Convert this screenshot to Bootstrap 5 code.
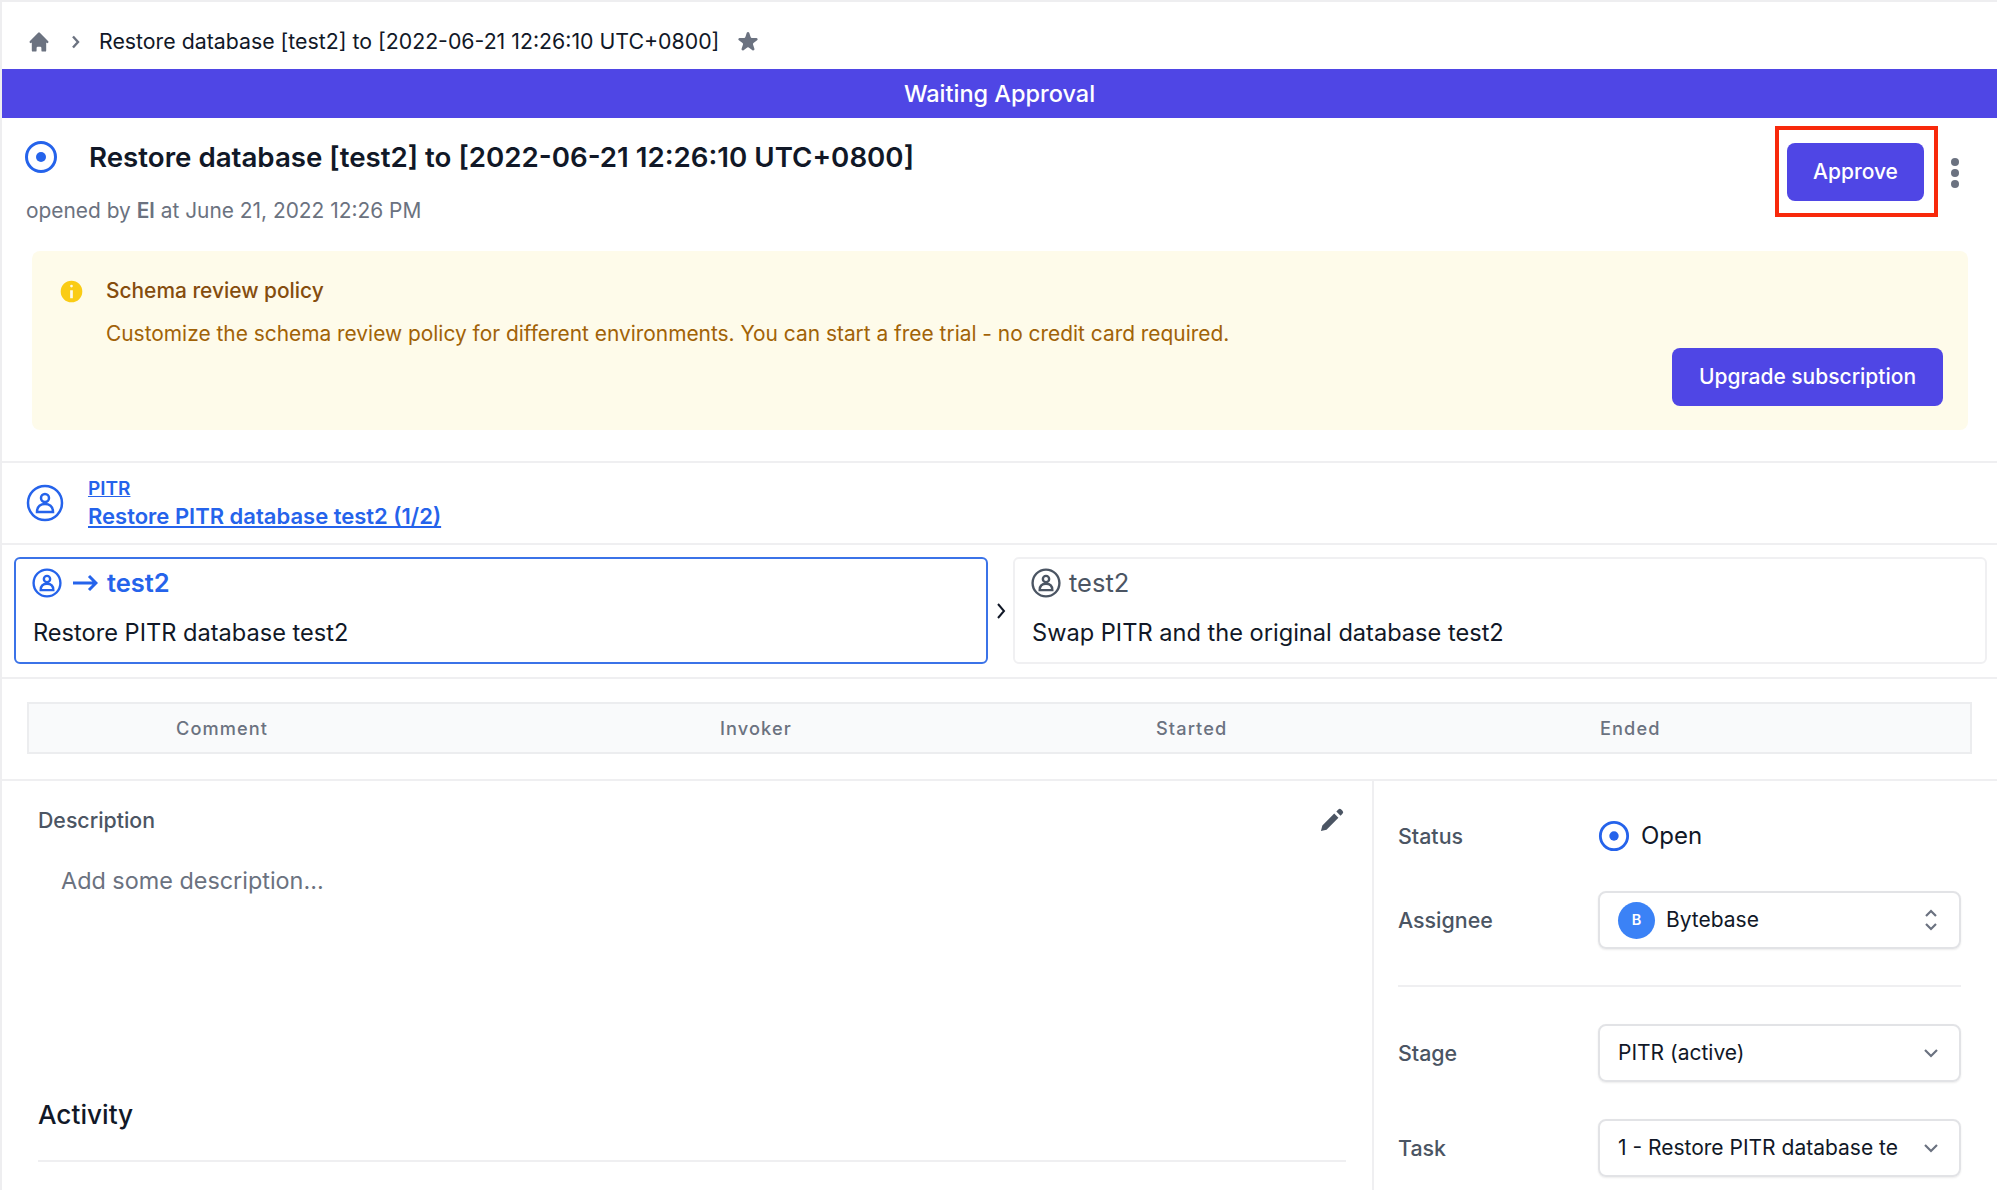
<!DOCTYPE html>
<html lang="en"><head><meta charset="utf-8"><title>Issue</title>
<link href="https://cdn.jsdelivr.net/npm/bootstrap@5.3.0/dist/css/bootstrap.min.css" rel="stylesheet">
<style>
html,body{height:1190px;overflow:hidden}
body{font-family:Inter,"Liberation Sans",sans-serif;color:#111827;background:#fff;font-size:22px;-webkit-font-smoothing:antialiased}
.shell{width:1997px;height:1190px;border-left:2px solid #eeeef0;border-top:2px solid #eeeef0;overflow:hidden}
.crumb{height:67px;padding-left:25px;padding-top:12px;font-size:21.3px;color:#111827}
.crumb .sep{margin:0 17px 0 18px}
.banner{height:49px;background:#4f46e5;color:#fff;font-weight:500;font-size:23.5px}
.headrow{padding:0 36px 0 22px;height:133px}
.titleline{font-size:27.7px;font-weight:600;line-height:38px;margin-top:20px;color:#111827}
.titleline svg{margin-right:31px}
.opened{font-size:20.9px;color:#6b7280;margin:19px 0 0 2px}
.opened b{font-weight:600}
.redbox{border:4px solid #f8290b;width:163px;height:91px;margin-top:8px;margin-right:11px}
.bb-btn{background:#4f46e5;color:#fff;font-weight:500;border:0;border-radius:8px;font-family:inherit}
.bb-btn:hover{background:#4338ca;color:#fff}
.appr{width:137px;height:58px;font-size:21px;margin-left:-2px}
.upg{width:271px;height:58px;font-size:21px}
.dotsv{margin-top:38px}
.warnbox{margin:0 29px 0 30px;height:179px;background:#fefbea;border-radius:8px;padding:26px 25px 24px 26px}
.warnhead{font-weight:500;color:#854d0e;font-size:20.9px;line-height:28px}
.warnbody{color:#a16207;font-size:20.9px;line-height:28px;margin:15px 0 0 48px}
.gap-head{margin-left:21px}
.rule{border-top:2px solid #efeff1}
.rule-gap{margin-top:31px}
.pipe{height:80px;padding-left:24px}
.pipe a{color:#2563eb;font-weight:600;display:block}
.pipeinfo{margin-left:24px;margin-top:1px}
.pipe .p1{font-size:19px;line-height:24px}
.pipe .p2{font-size:22px;line-height:30px}
.tasks{height:132px;padding:12px 8px 0 12px}
.taskcard{width:974px;height:107px;flex-shrink:0;border-radius:6px;border:2px solid #f0f0f2;padding:8px 17px}
.taskcard.on{border-color:#3b73e8}
.tname{font-size:25.5px;font-weight:500;line-height:32px;color:#4b5563}
.tname.cur{color:#2563eb;font-weight:600}
.tico{margin-left:-1px}
.tarrow{margin:0 9px 0 10px}
.tdesc{font-size:23.6px;line-height:32px;margin-top:18px;color:#111827}
.arrowcol{width:25px;flex-shrink:0;margin-top:-12px}
.tbl-wrap{padding:23px 25px 25px 25px;height:100px}
.thead-bar{height:52px;background:#f9fafb;border:2px solid #ecedef;font-size:18.2px;letter-spacing:1.1px;color:#6b7280;font-weight:500;padding:1px 0 0 147px}
.thc1{width:544px}.thc2{width:436px}.thc3{width:444px}
.mainleft{width:1372px;padding:25px 26px 0 36px;border-right:2px solid #efeff1;height:420px}
.desc-label{font-size:21.3px;font-weight:500;color:#4b5563;line-height:28px}
.desc-ph{font-size:23.4px;color:#6b7280;margin:31px 0 0 23px;line-height:32px;height:232px}
.activity{font-size:26.2px;font-weight:500;line-height:36px;padding-bottom:27px;border-bottom:2px solid #efeff1;color:#111827}
.sidebar{flex:1;padding:37px 36px 0 24px}
.sbrow{display:flex;align-items:center}
.sblabel{width:200px;font-size:21.4px;font-weight:500;color:#4b5563}
.selbox{width:363px;height:58px;border:2px solid #e2e3e6;border-radius:8px;box-shadow:0 1px 2px rgba(0,0,0,.08);padding:0 19px 0 18px;font-size:21px;color:#111827}
.avatarb{width:37px;height:37px;border-radius:50%;background:#3b82f6;color:#fff;font-size:14.5px;font-weight:600;margin-right:11px}
.sbdiv{border-top:2px solid #efeff1;margin:36px 0 37px}
.stat-open{margin-left:11px;font-size:24px}
.assign-row{margin-top:37px}
.task-row{margin-top:37px}
</style></head><body>
<div class="shell">
<div class="crumb d-flex align-items-center">
<svg width="24" height="24" viewBox="0 0 20 20" fill="#6b7280"><path d="M10.7 2.3a1 1 0 0 0-1.4 0l-7 7a1 1 0 0 0 1.4 1.4l.3-.3V17a1 1 0 0 0 1 1h2a1 1 0 0 0 1-1v-2a1 1 0 0 1 1-1h2a1 1 0 0 1 1 1v2a1 1 0 0 0 1 1h2a1 1 0 0 0 1-1v-6.600l.3.300a1 1 0 0 0 1.400-1.400z"/></svg>
<svg class="sep" width="13" height="16" viewBox="0 0 13 16" fill="none" stroke="#6b7280" stroke-width="2.400"><path d="M4 2.500l5 5.500-5 5.500"/></svg>
<span>Restore database [test2] to [2022-06-21 12:26:10 UTC+0800]</span>
<svg class="ms-3" width="26" height="26" viewBox="0 0 20 20" fill="#6b7280"><path d="M9.050 2.930c.3-.92 1.600-.92 1.900 0l1.070 3.290a1 1 0 0 0 .95.690h3.460c.97 0 1.370 1.240.59 1.810l-2.800 2.030a1 1 0 0 0-.36 1.120l1.070 3.290c.3.920-.76 1.690-1.540 1.120l-2.800-2.030a1 1 0 0 0-1.180 0l-2.800 2.030c-.78.57-1.840-.2-1.540-1.120l1.070-3.290a1 1 0 0 0-.36-1.120L2.980 8.720c-.78-.57-.38-1.810.59-1.810h3.460a1 1 0 0 0 .95-.69z"/></svg>
</div>
<div class="banner d-flex align-items-center justify-content-center">Waiting Approval</div>
<div class="headrow d-flex justify-content-between">
<div>
<div class="titleline d-flex align-items-center"><svg width="34" height="34" viewBox="0 0 34 34"><circle cx="17" cy="17" r="14.500" fill="none" stroke="#2563eb" stroke-width="3"/><circle cx="17" cy="17" r="5" fill="#2563eb"/></svg><span>Restore database [test2] to [2022-06-21 12:26:10 UTC+0800]</span></div>
<div class="opened">opened by <b>El</b> at June 21, 2022 12:26 PM</div>
</div>
<div class="d-flex align-items-start">
<div class="redbox d-flex align-items-center justify-content-center"><button class="btn bb-btn appr p-0">Approve</button></div>
<svg class="dotsv" width="12" height="36" viewBox="0 0 12 36" fill="#6b7280"><circle cx="6" cy="6" r="4"/><circle cx="6" cy="17" r="4"/><circle cx="6" cy="28" r="4"/></svg>
</div>
</div>
<div class="warnbox d-flex flex-column">
<div class="warnhead d-flex align-items-center"><svg width="27" height="27" viewBox="0 0 20 20" fill="#facc15"><path fill-rule="evenodd" d="M18 10a8 8 0 1 1-16 0 8 8 0 0 1 16 0zM11 6a1 1 0 1 1-2 0 1 1 0 0 1 2 0zM9 9h2v6H9z"/></svg><span class="gap-head">Schema review policy</span></div>
<div class="warnbody">Customize the schema review policy for different environments. You can start a free trial - no credit card required.</div>
<div class="d-flex justify-content-end"><button class="btn bb-btn upg p-0">Upgrade subscription</button></div>
</div>
<div class="rule rule-gap"></div>
<div class="pipe d-flex align-items-center">
<svg width="38" height="38" viewBox="0 0 38 38" fill="none" stroke="#2563eb" stroke-width="2.500"><circle cx="19" cy="19" r="17"/><circle cx="19" cy="14" r="4"/><path d="M11 28c0-6 4-8 8-8s8 2 8 8z"/></svg>
<div class="pipeinfo"><a class="p1" href="#">PITR</a><a class="p2" href="#">Restore PITR database test2 (1/2)</a></div>
</div>
<div class="rule"></div>
<div class="tasks d-flex align-items-start">
<div class="taskcard on">
<div class="tname cur d-flex align-items-center"><svg class="tico" width="30" height="30" viewBox="0 0 38 38" fill="none" stroke="#2563eb" stroke-width="3"><circle cx="19" cy="19" r="17"/><circle cx="19" cy="14" r="4"/><path d="M11 28c0-6 4-8 8-8s8 2 8 8z"/></svg><svg class="tarrow" width="26" height="18" viewBox="0 0 26 18" fill="none" stroke="#2563eb" stroke-width="3"><path d="M1 9h23M17 2l7 7-7 7"/></svg><span>test2</span></div>
<div class="tdesc">Restore PITR database test2</div>
</div>
<div class="arrowcol align-self-center d-flex justify-content-center"><svg width="12" height="20" viewBox="0 0 12 20" fill="none" stroke="#111827" stroke-width="2"><path d="M3 3l6 7-6 7"/></svg></div>
<div class="taskcard">
<div class="tname fw-normal d-flex align-items-center"><svg class="me-2 tico" width="30" height="30" viewBox="0 0 38 38" fill="none" stroke="#4b5563" stroke-width="3"><circle cx="19" cy="19" r="17"/><circle cx="19" cy="14" r="4"/><path d="M11 28c0-6 4-8 8-8s8 2 8 8z"/></svg><span>test2</span></div>
<div class="tdesc">Swap PITR and the original database test2</div>
</div>
</div>
<div class="rule"></div>
<div class="tbl-wrap"><div class="thead-bar d-flex align-items-center"><span class="thc1">Comment</span><span class="thc2">Invoker</span><span class="thc3">Started</span><span>Ended</span></div></div>
<div class="rule"></div>
<div class="d-flex">
<div class="mainleft">
<div class="d-flex justify-content-between align-items-center"><span class="desc-label">Description</span><svg width="28" height="28" viewBox="0 0 20 20" fill="#4b5563"><path d="M14.500 2.500a1.500 1.500 0 0 1 2.100 0l.9.900a1.500 1.500 0 0 1 0 2.100l-1.400 1.400-3-3zM11.600 5.400l3 3-8.500 8.500-4 1 1-4z"/></svg></div>
<div class="desc-ph">Add some description...</div>
<div class="activity">Activity</div>
</div>
<div class="sidebar">
<div class="sbrow"><span class="sblabel">Status</span><svg width="32" height="32" viewBox="0 0 34 34"><circle cx="17" cy="17" r="14.500" fill="none" stroke="#2563eb" stroke-width="3"/><circle cx="17" cy="17" r="5" fill="#2563eb"/></svg><span class="stat-open">Open</span></div>
<div class="sbrow assign-row"><span class="sblabel">Assignee</span><div class="selbox d-flex align-items-center"><span class="avatarb d-flex align-items-center justify-content-center">B</span><span>Bytebase</span><svg class="ms-auto" width="18" height="26" viewBox="0 0 18 26" fill="none" stroke="#6b7280" stroke-width="2.200"><path d="M4 9l5-5 5 5M4 17l5 5 5-5"/></svg></div></div>
<div class="sbdiv"></div>
<div class="sbrow"><span class="sblabel">Stage</span><div class="selbox d-flex align-items-center"><span>PITR (active)</span><svg class="ms-auto" width="18" height="12" viewBox="0 0 18 12" fill="none" stroke="#6b7280" stroke-width="2.200"><path d="M3 3l6 6 6-6"/></svg></div></div>
<div class="sbrow task-row"><span class="sblabel">Task</span><div class="selbox d-flex align-items-center"><span class="text-nowrap">1 - Restore PITR database te</span><svg class="ms-auto" width="18" height="12" viewBox="0 0 18 12" fill="none" stroke="#6b7280" stroke-width="2.200"><path d="M3 3l6 6 6-6"/></svg></div></div>
</div>
</div>
</div>
<script src="https://cdn.jsdelivr.net/npm/bootstrap@5.3.0/dist/js/bootstrap.bundle.min.js"></script>
</body></html>
